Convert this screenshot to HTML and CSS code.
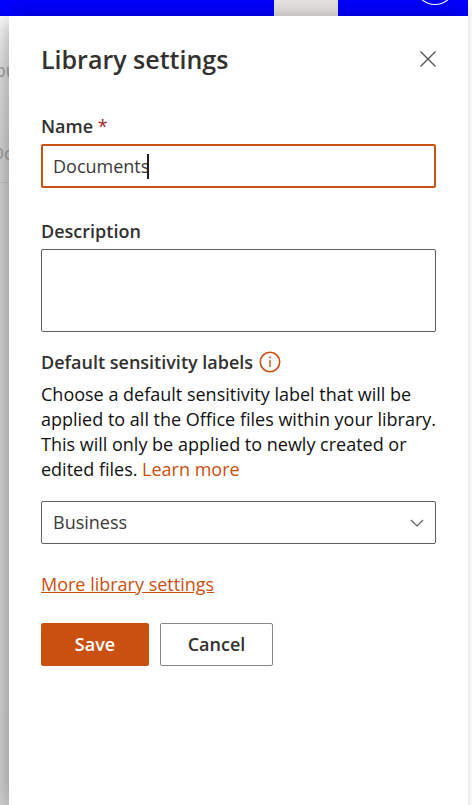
FILE: index.html
```html
<!DOCTYPE html>
<html lang="en">
<head>
<meta charset="utf-8">
<title>Library settings</title>
<link rel="stylesheet" href="styles.css">
</head>
<body>
<header class="suite-bar">
  <span class="suite-tile"></span>
  <svg class="suite-avatar" viewBox="0 0 40 16" aria-hidden="true"><circle cx="20" cy="-15" r="19.5" fill="none" stroke="#fff" stroke-width="1.2"/></svg>
</header>
<div class="workspace">
  <div class="backdrop" aria-hidden="true">
    <div class="backdrop-row backdrop-nav"><span>ou</span></div>
    <div class="backdrop-row backdrop-title"><span>Do</span></div>
  </div>
  <main class="panel">
    <div class="panel-header">
      <h1>Library settings</h1>
      <button class="close" type="button" aria-label="Close">
        <svg viewBox="0 0 16 16" aria-hidden="true"><path d="M.5 .5l15 15M15.500 .5l-15 15" fill="none" stroke="#55534f" stroke-width="1.4"/></svg>
      </button>
    </div>
    <form>
      <div class="field">
        <label for="name">Name <span class="required">*</span></label>
        <div class="name-box">
          <input id="name" type="text" value="Documents" required>
          <span class="caret"></span>
        </div>
      </div>
      <div class="field description">
        <label for="description">Description</label>
        <textarea id="description"></textarea>
      </div>
      <div class="field sensitivity">
        <div class="label-row">
          <label for="sensitivity">Default sensitivity labels</label>
          <svg class="info" viewBox="0 0 22 22" aria-hidden="true"><circle cx="11" cy="11" r="9.700" fill="none" stroke="#ca5010" stroke-width="1.600"/><path d="M11 9v7" stroke="#ca5010" stroke-width="1.400"/><circle cx="11" cy="6.500" r="1" fill="#ca5010"/></svg>
        </div>
        <p>Choose a default sensitivity label that will be applied to all the Office files within your library. This will only be applied to newly created or edited files. <a href="#learn">Learn more</a></p>
        <div class="select-box">
          <select id="sensitivity"><option>Business</option></select>
          <svg class="chevron" viewBox="0 0 14 8" aria-hidden="true"><path d="M1 1l6 6 6-6" fill="none" stroke="#605e5c" stroke-width="1.200"/></svg>
        </div>
      </div>
      <a class="more" href="#more">More library settings</a>
      <div class="actions">
        <button class="save" type="button">Save</button>
        <button class="cancel" type="button">Cancel</button>
      </div>
    </form>
  </main>
  <div class="page-edge"></div>
</div>
</body>
</html>
```
FILE: styles.css
```css
* {
  box-sizing: border-box;
}

body {
  display: flex;
  flex-direction: column;
  min-height: 100vh;
  margin: 0;
  overflow: hidden;
  background: #fff;
  color: #323130;
  font: 18px/25px "Open Sans", "Noto Sans", sans-serif;
}

.suite-bar {
  display: flex;
  justify-content: flex-end;
  height: 16px;
  margin-right: 4px;
  padding-right: 13px;
  background: #00f;
}

.suite-tile {
  width: 64px;
  margin-right: 77px;
  background: #e6e5e3;
}

.suite-avatar {
  width: 40px;
  height: 16px;
}

.workspace {
  display: flex;
  flex: 1;
}

.backdrop {
  width: 9px;
  padding-top: 42px;
  background: linear-gradient(#fff, #e6e6e6 60px, #dadada 130px, #d8d8d8);
  color: #a3a3a3;
}

.backdrop-row {
  display: flex;
}

.backdrop-nav {
  text-indent: -5px;
}

.backdrop-title {
  height: 100px;
  padding-top: 58px;
  border-bottom: 1px solid #c8c8c8;
  text-indent: -9px;
}

.panel {
  position: relative;
  flex: 1;
  min-width: 0;
  padding: 25px 32px 32px;
  background: #fff;
  box-shadow: 0 5px 24px rgba(0, 0, 0, 0.4);
}

.page-edge {
  position: relative;
  width: 4px;
  border-left: 2px solid #ebebeb;
  background: #f8f8f8;
}

.panel-header {
  display: flex;
  align-items: center;
  justify-content: space-between;
  margin-bottom: 37px;
}

h1 {
  margin: 0;
  font-size: 25px;
  font-weight: 600;
  line-height: 36px;
}

.close {
  display: flex;
  padding: 0;
  border: 0;
  background: none;
}

.close svg {
  width: 16px;
  height: 16px;
}

.field {
  display: flex;
  flex-direction: column;
  gap: 6px;
}

label {
  font-weight: 600;
  line-height: 24px;
}

.required {
  color: #a4262c;
  font-weight: 400;
}

input,
textarea,
select {
  display: block;
  width: 100%;
  margin: 0;
  border: 1px solid #605e5c;
  border-radius: 2px;
  outline: 0;
  background: #fff;
  color: #3b3a39;
  font: inherit;
}

.name-box,
.select-box {
  position: relative;
}

input {
  height: 44px;
  padding: 0 10px;
  border: 2px solid #ca5010;
}

.caret {
  position: absolute;
  top: 10px;
  left: 106px;
  width: 2px;
  height: 25px;
  background: #201f1e;
}

.description {
  margin-top: 31px;
}

textarea {
  height: 83px;
  padding: 8px 11px;
  resize: none;
}

.sensitivity {
  margin-top: 18px;
}

.label-row {
  display: flex;
  align-items: center;
  gap: 6px;
}

.info {
  width: 22px;
  height: 22px;
}

p {
  margin: 2px -16px 13px 0;
  color: #111;
}

a {
  color: #ca5010;
  text-decoration: none;
}

select {
  height: 43px;
  padding: 0 40px 0 11px;
  appearance: none;
}

.chevron {
  position: absolute;
  top: 18px;
  right: 12px;
  width: 14px;
  height: 8px;
  pointer-events: none;
}

.more {
  display: inline-block;
  margin-top: 28px;
  text-decoration: underline;
}

.actions {
  display: flex;
  gap: 11px;
  margin-top: 26px;
}

.actions button {
  height: 43px;
  border: 1px solid #8a8886;
  border-radius: 2px;
  background: #fff;
  color: #323130;
  font: inherit;
  font-weight: 600;
}

.actions .save {
  width: 108px;
  border-color: #ca5010;
  background: #ca5010;
  color: #fff;
}

.actions .cancel {
  width: 113px;
}
```
